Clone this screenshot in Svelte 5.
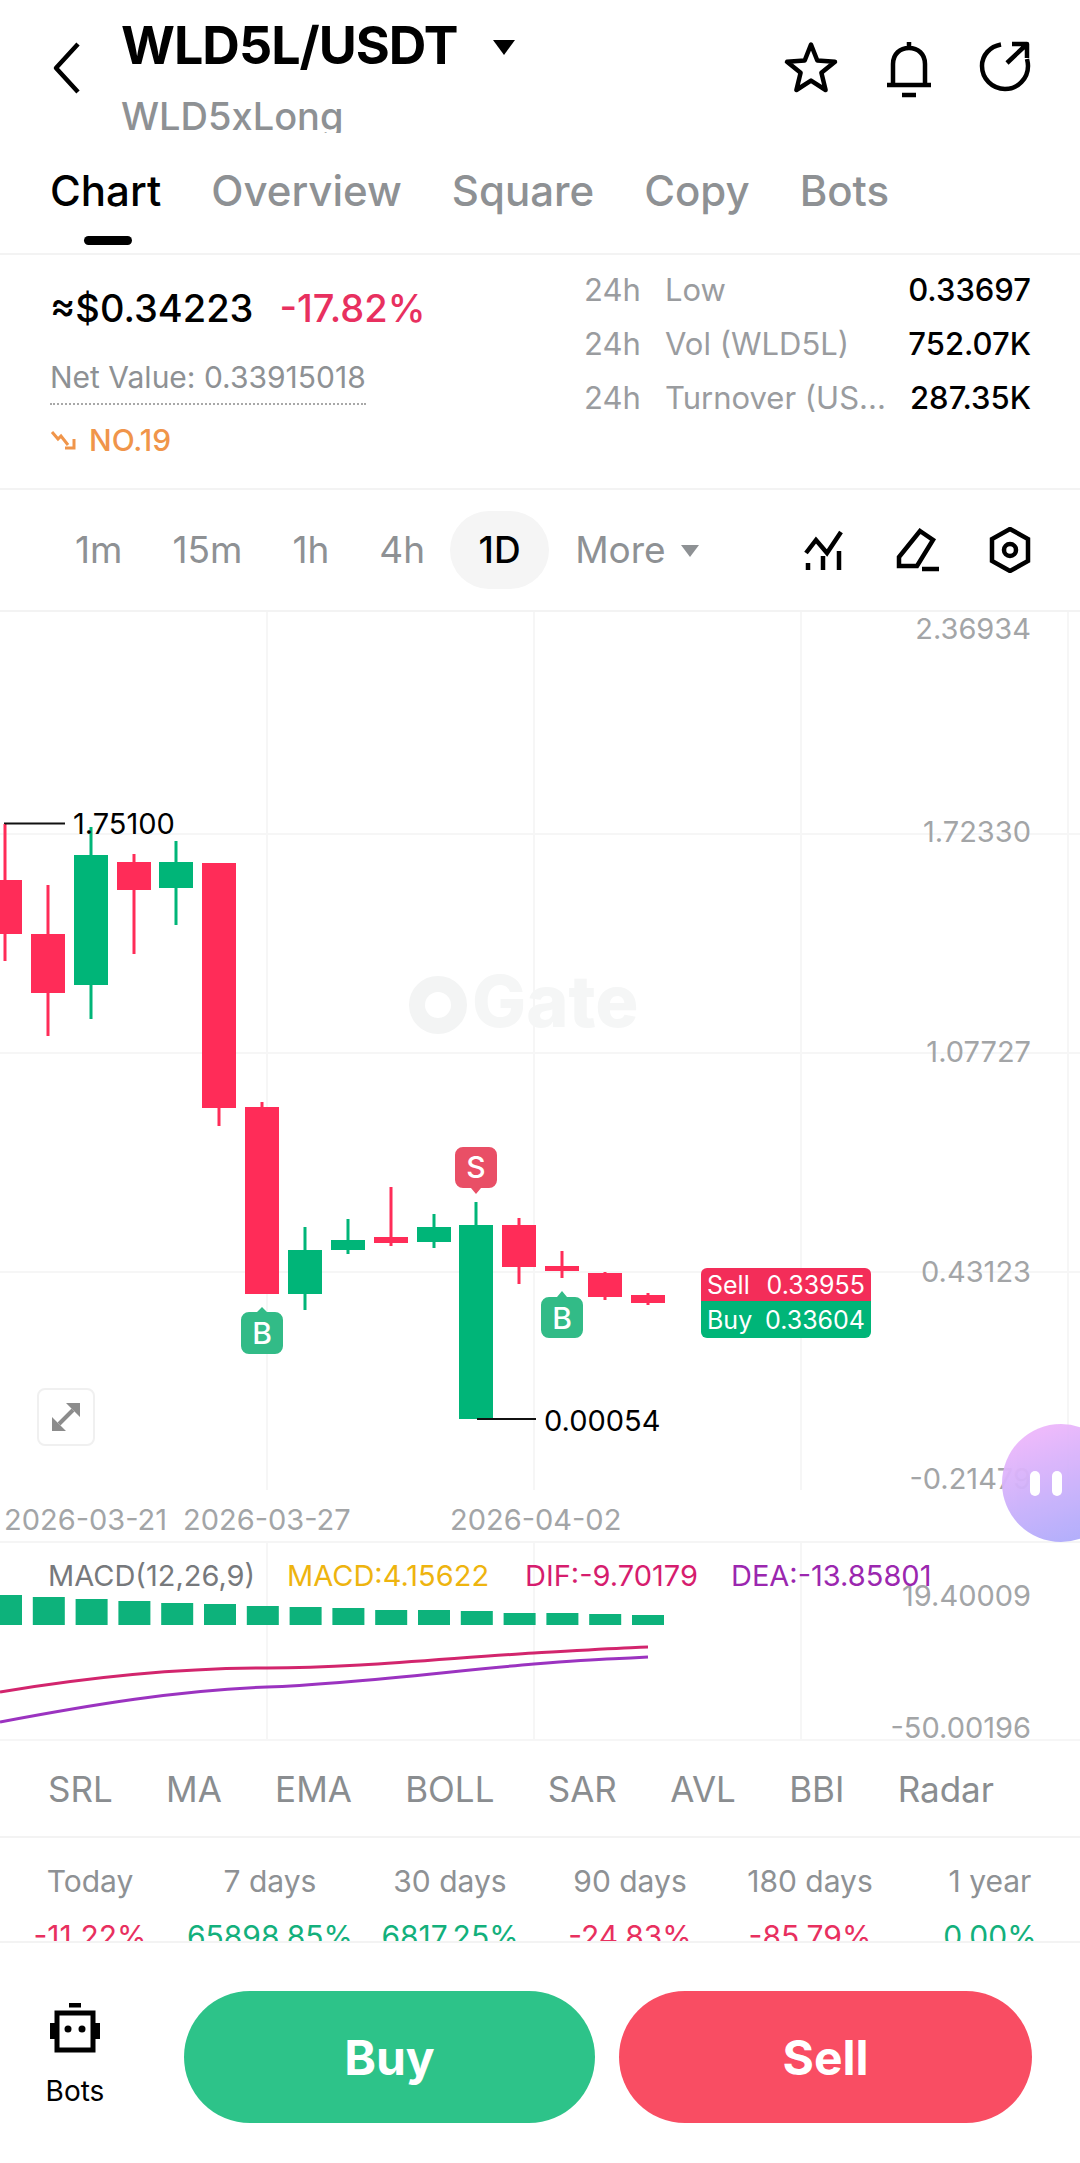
<script>
  const tabs = ["Chart", "Overview", "Square", "Copy", "Bots"];
  const stats = [
    { label: "Low", value: "0.33697" },
    { label: "Vol (WLD5L)", value: "752.07K" },
    { label: "Turnover (US...", value: "287.35K" },
  ];
  const frames = ["1m", "15m", "1h", "4h", "1D"];
  const indicators = ["SRL", "MA", "EMA", "BOLL", "SAR", "AVL", "BBI", "Radar"];
  const perf = [
    { label: "Today", value: "-11.22%", up: false },
    { label: "7 days", value: "65898.85%", up: true },
    { label: "30 days", value: "6817.25%", up: true },
    { label: "90 days", value: "-24.83%", up: false },
    { label: "180 days", value: "-85.79%", up: false },
    { label: "1 year", value: "0.00%", up: true },
  ];

  // x, body top, body bottom, wick top, wick bottom, in page pixels
  const candles = [
    [5, 880, 934, 824, 961, 0],
    [48, 934, 993, 885, 1036, 0],
    [91, 855, 985, 827, 1019, 1],
    [134, 862, 890, 854, 954, 0],
    [176, 862, 888, 841, 925, 1],
    [219, 863, 1108, 863, 1126, 0],
    [262, 1107, 1294, 1102, 1294, 0],
    [305, 1250, 1294, 1227, 1310, 1],
    [348, 1240, 1250, 1219, 1254, 1],
    [391, 1237, 1243, 1187, 1246, 0],
    [434, 1227, 1242, 1214, 1248, 1],
    [476, 1225, 1419, 1202, 1419, 1],
    [519, 1225, 1267, 1218, 1284, 0],
    [562, 1266, 1271, 1251, 1278, 0],
    [605, 1273, 1297, 1272, 1300, 0],
    [648, 1295, 1303, 1293, 1305, 0],
  ];
  const chartTop = 612;
  const macdTop = 1543;
  const axis = [
    ["2.36934", 628],
    ["1.72330", 831],
    ["1.07727", 1051],
    ["0.43123", 1271],
    ["-0.21479", 1478],
  ];
  const histTops = [1595, 1597, 1599, 1601, 1603, 1604, 1606, 1607, 1608, 1610, 1610, 1611, 1613, 1613, 1614, 1615];
</script>

<div class="page">
  <header class="top">
    <svg class="back" width="30" height="52" viewBox="0 0 30 52"><path d="M26 2 4 26l22 24" transform="scale(1 1)" /></svg>
    <div class="pair">
      <div class="pair-row">
        <h1>WLD5L/USDT</h1>
        <span class="caret"></span>
      </div>
      <div class="pair-sub"><span>WLD5xLong</span></div>
    </div>
    <div class="top-icons">
      <svg width="56" height="56" viewBox="0 0 56 56"><path d="M28 4.5 34.3 20.5 52 21.8 38.4 32.8 42.6 50 28 40.6 13.4 50 17.6 32.8 4 21.8 21.7 20.5Z" /></svg>
      <svg width="48" height="58" viewBox="0 0 48 58"><path d="M24 2v6M8 44V24C8 14 15 8 24 8s16 6 16 16v20M2 45h44M17 55h14" /></svg>
      <svg width="52" height="52" viewBox="0 0 52 52"><path d="M22 4.5C11 6.500 3 15 3 26c0 12.500 10 23 23 23s23-10.500 23-23c0-3-.5-5-1-7M28 23 47 5M33 4h15v14" /></svg>
    </div>
  </header>

  <nav class="tabs">
    {#each tabs as tab, i}
      <span class="tab" class:active={i === 0}>{tab}</span>
    {/each}
  </nav>

  <section class="summary">
    <div class="summary-left">
      <div class="price-row">
        <span class="price">≈$0.34223</span>
        <span class="change">-17.82%</span>
      </div>
      <div class="net">Net Value: 0.33915018</div>
      <div class="rank">
        <svg width="26" height="24" viewBox="0 0 26 24"><path d="M2 4l6 7 3-3 7 9M24 11v9h-9" /></svg>
        <span>NO.19</span>
      </div>
    </div>
    <div class="summary-right">
      {#each stats as stat}
        <div class="stat">
          <span class="stat-h">24h</span>
          <span class="stat-label">{stat.label}</span>
          <span class="stat-value">{stat.value}</span>
        </div>
      {/each}
    </div>
  </section>

  <div class="frames">
    {#each frames as f}
      <span class="frame" class:on={f === "1D"}>{f}</span>
    {/each}
    <span class="more">More<i></i></span>
    <div class="tools">
      <svg width="42" height="42" viewBox="0 0 42 42"><path d="M3 24 13 11l11 13L38 3M5 34v7M20 27v14M36 22v19" /></svg>
      <svg width="44" height="44" viewBox="0 0 44 44"><path d="M25 3 38 12 22 38H4V29ZM27 41H44" /></svg>
      <svg width="42" height="46" viewBox="0 0 42 46"><path d="M21 2 39 12V34L21 44 3 34V12Z" /><circle cx="21" cy="23" r="6" /></svg>
    </div>
  </div>

  <div class="chart">
    <svg width="1080" height="931" viewBox="0 {chartTop} 1080 931">
      {#each [267, 534, 801] as x}
        <line class="grid" x1={x} x2={x} y1={chartTop} y2="1490" />
      {/each}
      <line class="grid" x1="1068" x2="1068" y1={chartTop} y2="1490" />
      {#each [834, 1053, 1272] as y}
        <line class="grid" x1="0" x2="1080" y1={y} y2={y} />
      {/each}

      <g class="mark">
        <circle cx="438" cy="1005" r="21" />
        <text x="472" y="1027">Gate</text>
      </g>

      {#each axis as [t, y]}
        <text class="axis" x="1031" y={y + 11}>{t}</text>
      {/each}

      {#each candles as [x, top, bottom, wt, wb, up]}
        <rect x={x - 1.500} y={wt} width="3" height={wb - wt} fill={up ? "#00b578" : "#ff2c58"} />
        <rect x={x - 17} y={top} width="34" height={bottom - top} fill={up ? "#00b578" : "#ff2c58"} />
      {/each}

      <path class="lead" d="M5 824V823.500H65" />
      <text class="hl" x="73" y="834">1.75100</text>
      <path class="lead" d="M477 1419H536" />
      <text class="hl" x="544" y="1431">0.00054</text>

      <g>
        <path fill="#e94f66" d="M463 1147h26a8 8 0 0 1 8 8v25a8 8 0 0 1-8 8h-8l-5 6-5-6h-8a8 8 0 0 1-8-8v-25a8 8 0 0 1 8-8Z" />
        <text class="flag" x="476" y="1178">S</text>
        <path fill="#32bb87" d="M249 1312h8l5-5 5 5h8a8 8 0 0 1 8 8v26a8 8 0 0 1-8 8h-26a8 8 0 0 1-8-8v-26a8 8 0 0 1 8-8Z" />
        <text class="flag" x="262" y="1344">B</text>
        <path fill="#32bb87" d="M549 1297h8l5-6 5 6h8a8 8 0 0 1 8 8v25a8 8 0 0 1-8 8h-26a8 8 0 0 1-8-8v-25a8 8 0 0 1 8-8Z" />
        <text class="flag" x="562" y="1329">B</text>
      </g>

      <path fill="#f32d59" d="M707 1268h158a6 6 0 0 1 6 6v27H701v-27a6 6 0 0 1 6-6Z" />
      <path fill="#00b578" d="M701 1301h170v31a6 6 0 0 1-6 6H707a6 6 0 0 1-6-6Z" />
      <text class="tag" x="707" y="1294">Sell</text>
      <text class="tag end" x="865" y="1294">0.33955</text>
      <text class="tag" x="707" y="1329">Buy</text>
      <text class="tag end" x="865" y="1329">0.33604</text>

      <text class="date" x="4" y="1530">2026-03-21</text>
      <text class="date" x="183" y="1530">2026-03-27</text>
      <text class="date" x="450" y="1530">2026-04-02</text>
    </svg>
    <div class="expand">
      <svg width="32" height="32" viewBox="0 0 32 32"><path d="M2 30V16l14 14ZM30 2v14L16 2Z" /><path class="bar" d="M9 23 23 9" /></svg>
    </div>
  </div>

  <div class="macd">
    <svg width="1080" height="198" viewBox="0 {macdTop} 1080 198">
      {#each [267, 534, 801] as x}
        <line class="grid" x1={x} x2={x} y1={macdTop} y2="1741" />
      {/each}
      <line class="grid" x1="0" x2="1080" y1="1740" y2="1740" />

      {#each histTops as top, i}
        <rect x={i * 42.8 - 10} y={top} width="32" height={1625 - top} fill="#0db27b" />
      {/each}
      <path class="dif" d="M0 1692C90 1677 180 1668 267 1668S450 1658 534 1653 600 1649 648 1647" />
      <path class="dea" d="M0 1722C90 1705 180 1690 267 1687S450 1671 534 1664 600 1660 648 1657" />

      <text class="axis" x="1031" y="1606">19.40009</text>
      <text class="axis" x="1031" y="1738">-50.00196</text>

      <text class="macd-t" x="48" y="1586" fill="#77797c">MACD(12,26,9)</text>
      <text class="macd-t" x="287" y="1586" fill="#eeb40f">MACD:4.15622</text>
      <text class="macd-t" x="525" y="1586" fill="#d61d6e">DIF:-9.70179</text>
      <text class="macd-t" x="731" y="1586" fill="#9b27af">DEA:-13.85801</text>
    </svg>
  </div>

  <div class="indicators">
    {#each indicators as ind}
      <span>{ind}</span>
    {/each}
  </div>

  <div class="perf">
    {#each perf as p}
      <div class="perf-col">
        <span class="perf-label">{p.label}</span>
        <span class="perf-value" class:up={p.up}>{p.value}</span>
      </div>
    {/each}
  </div>

  <footer class="bar">
    <div class="bots">
      <svg width="50" height="50" viewBox="0 0 50 50"><path class="robot" d="M7 10H43V47H7ZM2 20V36M48 20V36M19 2H31" /><circle cx="18" cy="26" r="3.500" /><circle cx="32" cy="26" r="3.500" /></svg>
      <span>Bots</span>
    </div>
    <button class="buy">Buy</button>
    <button class="sell">Sell</button>
  </footer>

  <div class="bubble"><i></i><i></i></div>
</div>

<style>
  :global(body) {
    margin: 0;
    background: #fff;
  }
  .page {
    position: relative;
    width: 1080px;
    height: 2163px;
    overflow: hidden;
    display: flex;
    flex-direction: column;
    background: #fff;
    color: #000;
    font-family: Inter, "Liberation Sans", sans-serif;
  }
  svg {
    display: block;
  }
  .top {
    height: 137px;
    flex: none;
    display: flex;
    padding-left: 52px;
    padding-right: 49px;
    box-sizing: border-box;
  }
  .top svg path {
    fill: none;
    stroke: #000;
    stroke-width: 4.500;
    stroke-linejoin: round;
  }
  .back {
    margin-top: 42px;
  }
  .pair {
    margin-left: 39px;
  }
  .pair-row {
    display: flex;
    align-items: flex-start;
    height: 92px;
  }
  h1 {
    margin: 0;
    padding-top: 14px;
    font-size: 52px;
    line-height: 63px;
    font-weight: 700;
    letter-spacing: -1px;
  }
  .caret {
    width: 0;
    height: 0;
    margin: 40px 0 0 36px;
    border-left: 11px solid transparent;
    border-right: 11px solid transparent;
    border-top: 15px solid #000;
  }
  .pair-sub {
    height: 41px;
    overflow: hidden;
    color: #8e9194;
    font-size: 38px;
    line-height: 48px;
    font-weight: 500;
  }
  .top-icons {
    margin-left: auto;
    display: flex;
    align-items: flex-start;
    gap: 46px;
    padding-top: 40px;
  }
  .tabs {
    height: 118px;
    flex: none;
    box-sizing: border-box;
    display: flex;
    gap: 50px;
    padding: 28px 0 0 50px;
    border-bottom: 2px solid #f3f3f3;
    font-size: 42px;
    line-height: 52px;
    font-weight: 500;
    color: #8e9194;
  }
  .tab {
    position: relative;
    height: 52px;
  }
  .tab.active {
    color: #000;
  }
  .tab.active::after {
    content: "";
    position: absolute;
    left: 34px;
    top: 71px;
    width: 48px;
    height: 9px;
    border-radius: 5px;
    background: #000;
  }
  .summary {
    height: 235px;
    flex: none;
    box-sizing: border-box;
    display: flex;
    justify-content: space-between;
    padding: 0 49px 0 50px;
    border-bottom: 2px solid #f3f3f3;
  }
  .price-row {
    display: flex;
    align-items: baseline;
    gap: 26px;
    margin-top: 30px;
    font-size: 38px;
    line-height: 46px;
    font-weight: 500;
  }
  .change {
    color: #e8305f;
  }
  .net {
    width: max-content;
    margin-top: 27px;
    padding-bottom: 7px;
    border-bottom: 2px dotted #a8a8a8;
    color: #8e9194;
    font-size: 30px;
    line-height: 38px;
  }
  .rank {
    display: flex;
    align-items: center;
    gap: 13px;
    margin-top: 15px;
    color: #f0954a;
    font-size: 30px;
    line-height: 40px;
    font-weight: 500;
  }
  .rank path {
    fill: none;
    stroke: #f0954a;
    stroke-width: 3;
  }
  .summary-right {
    width: 447px;
    padding-top: 7px;
  }
  .stat {
    display: flex;
    align-items: center;
    height: 54px;
    font-size: 31px;
    color: #9a9c9f;
  }
  .stat-h {
    width: 81px;
  }
  .stat-value {
    margin-left: auto;
    color: #000;
    font-weight: 500;
  }
  .frames {
    height: 122px;
    flex: none;
    box-sizing: border-box;
    display: flex;
    align-items: center;
    padding: 0 49px 0 75px;
    border-bottom: 2px solid #f3f3f3;
    color: #8e9194;
    font-size: 37px;
    line-height: 46px;
  }
  .frame {
    margin-right: 50px;
  }
  .frame.on {
    width: 99px;
    height: 78px;
    margin: 0 26px 0 -25px;
    border-radius: 39px;
    background: #f5f5f5;
    color: #000;
    font-weight: 500;
    text-align: center;
    line-height: 78px;
  }
  .more {
    display: flex;
    align-items: center;
  }
  .more i {
    width: 0;
    height: 0;
    margin: 2px 0 0 15px;
    border-left: 9px solid transparent;
    border-right: 9px solid transparent;
    border-top: 12px solid #8e9194;
  }
  .tools {
    margin-left: auto;
    display: flex;
    align-items: center;
    gap: 50px;
  }
  .tools path,
  .tools circle {
    fill: none;
    stroke: #000;
    stroke-width: 4.500;
  }
  .chart {
    position: relative;
    height: 931px;
    flex: none;
    box-sizing: border-box;
    border-bottom: 2px solid #f5f5f5;
  }
  .grid {
    stroke: #f6f6f6;
    stroke-width: 2;
  }
  .mark {
    fill: #f5f6f6;
  }
  .mark circle {
    fill: none;
    stroke: #f3f4f4;
    stroke-width: 16;
  }
  .mark text {
    font-size: 72px;
    font-weight: 800;
  }
  .axis {
    text-anchor: end;
    fill: #a3a5a7;
    font-size: 29px;
  }
  .lead {
    fill: none;
    stroke: #111;
    stroke-width: 2;
  }
  .hl {
    font-size: 29px;
    fill: #000;
  }
  .flag {
    fill: #fff;
    font-size: 30px;
    font-weight: 500;
    text-anchor: middle;
  }
  .tag {
    fill: #fff;
    font-size: 25px;
  }
  .tag.end {
    text-anchor: end;
  }
  .date {
    fill: #a3a5a7;
    font-size: 29px;
  }
  .expand {
    position: absolute;
    left: 37px;
    top: 776px;
    width: 58px;
    height: 58px;
    box-sizing: border-box;
    display: flex;
    align-items: center;
    justify-content: center;
    border: 2px solid #f0f0f0;
    border-radius: 8px;
  }
  .expand path {
    fill: #8c8c8c;
  }
  .expand .bar {
    stroke: #8c8c8c;
    stroke-width: 4;
  }
  .macd {
    height: 198px;
    flex: none;
  }
  .dif,
  .dea {
    fill: none;
    stroke-width: 3;
  }
  .dif {
    stroke: #d2256d;
  }
  .dea {
    stroke: #9b33c0;
  }
  .macd-t {
    font-size: 29px;
  }
  .indicators {
    height: 97px;
    flex: none;
    box-sizing: border-box;
    display: flex;
    align-items: center;
    justify-content: space-between;
    padding: 0 86px 0 48px;
    border-bottom: 2px solid #f3f3f3;
    color: #8a8d90;
    font-size: 35px;
  }
  .perf {
    height: 105px;
    flex: none;
    box-sizing: border-box;
    overflow: hidden;
    display: grid;
    grid-template-columns: repeat(6, 180px);
    padding-top: 24px;
    border-bottom: 2px solid #f3f3f3;
  }
  .perf-col {
    display: flex;
    flex-direction: column;
    align-items: center;
    gap: 17px;
    font-size: 30px;
    line-height: 38px;
  }
  .perf-label {
    color: #8e9194;
  }
  .perf-value {
    color: #e8305f;
  }
  .perf-value.up {
    color: #13b07c;
  }
  .bar {
    flex: 1;
    display: flex;
    align-items: flex-start;
    padding: 48px 48px 0 0;
    box-sizing: border-box;
  }
  .bots {
    width: 184px;
    flex: none;
    display: flex;
    flex-direction: column;
    align-items: center;
    padding: 12px 34px 0 0;
    box-sizing: border-box;
    font-size: 28px;
    line-height: 36px;
  }
  .bots span {
    margin-top: 20px;
  }
  .robot {
    fill: none;
    stroke: #000;
    stroke-width: 5;
  }
  button {
    height: 132px;
    border: 0;
    border-radius: 66px;
    color: #fff;
    font-family: inherit;
    font-size: 48px;
    font-weight: 700;
    padding: 0;
  }
  .buy {
    width: 411px;
    background: #2dc389;
  }
  .sell {
    width: 413px;
    margin-left: 24px;
    background: #f94d63;
  }
  .bubble {
    position: absolute;
    left: 1002px;
    top: 1424px;
    width: 118px;
    height: 118px;
    box-sizing: border-box;
    display: flex;
    gap: 12px;
    align-items: center;
    padding-left: 28px;
    border-radius: 59px;
    background: linear-gradient(160deg, #f6b9fb, #a6a9fb);
    opacity: 0.95;
  }
  .bubble i {
    width: 10px;
    height: 25px;
    border-radius: 5px;
    background: #fff;
  }
</style>
